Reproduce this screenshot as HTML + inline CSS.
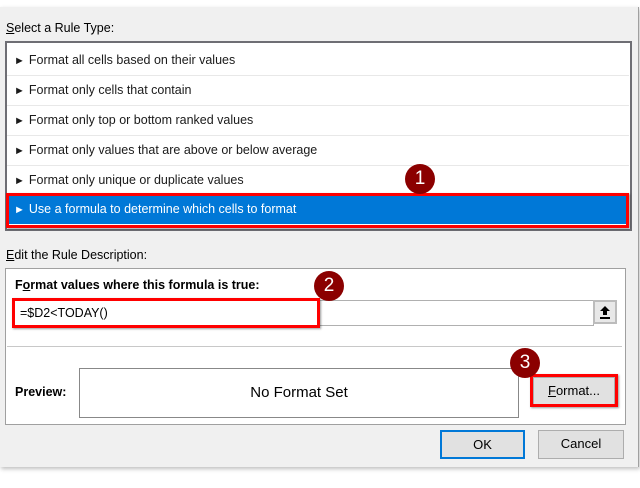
<!DOCTYPE html>
<html><head><style>
body{margin:0;width:640px;height:488px;background:#fff;position:relative;overflow:hidden;font-family:"Liberation Sans",sans-serif;font-size:12px;color:#000}
.a{position:absolute}
.dlg{left:0;top:7px;width:638px;height:460px;background:#f0f0f0;border-right:1px solid #a0a0a0;box-shadow:1px 2px 4px rgba(0,0,0,.25)}
.row{left:7px;width:622px;height:30px;line-height:30px;border-bottom:1px solid #e8e8e8;font-size:12.5px;color:#1a1a1a}
.row span{font-size:11px;margin:0 4px 0 7px}
.c{width:30px;height:30px;border-radius:50%;background:#8b0000;color:#fff;font-size:19px;text-align:center;line-height:30px}
.btn{background:#e1e1e1;border:1px solid #adadad;text-align:center;line-height:26px;font-size:13px}
</style></head><body>
<div class="a dlg"></div>
<div class="a" style="left:6px;top:21px;font-size:12.5px"><u>S</u>elect a Rule Type:</div>
<div class="a" style="left:5px;top:41px;width:623px;height:186px;background:#fff;border:2px solid #6e6e74"></div>
<div class="a row" style="top:45px"><span>►</span>Format all cells based on their values</div>
<div class="a row" style="top:75px"><span>►</span>Format only cells that contain</div>
<div class="a row" style="top:105px"><span>►</span>Format only top or bottom ranked values</div>
<div class="a row" style="top:135px"><span>►</span>Format only values that are above or below average</div>
<div class="a row" style="top:165px"><span>►</span>Format only unique or duplicate values</div>
<div class="a row" style="top:195px;height:29px;line-height:29px;background:#0078d7;color:#fff;border:none"><span>►</span>Use a formula to determine which cells to format</div>
<div class="a" style="left:6px;top:193px;width:617px;height:29px;border:3px solid #f00;box-shadow:1px 1px 2px rgba(0,0,0,.4)"></div>
<div class="a" style="left:6px;top:248px;font-size:12.5px"><u>E</u>dit the Rule Description:</div>
<div class="a" style="left:5px;top:268px;width:619px;height:155px;background:#fff;border:1px solid #a0a0a0"></div>
<div class="a" style="left:15px;top:278px;font-weight:bold;font-size:12.5px">F<u>o</u>rmat values where this formula is true:</div>
<div class="a" style="left:12px;top:300px;width:580px;height:24px;border:1px solid #b0b0b0;background:#fff"></div>
<div class="a" style="left:593px;top:300px;width:20px;height:20px;border:2px solid #bcbcbc;background:#e8e8e8">
<svg width="20" height="20" viewBox="0 0 20 20"><path d="M10 4 L5 9 H8 V13 H12 V9 H15 Z M5 15 H15 V17 H5 Z" fill="#000"/></svg></div>
<div class="a" style="left:12px;top:298px;height:24px;border:3px solid #f00;box-shadow:1px 1px 2px rgba(0,0,0,.4);line-height:24px;font-size:12.5px;padding-left:5px;width:297px">=$D2&lt;TODAY()</div>
<div class="a" style="left:7px;top:346px;width:615px;height:1px;background:#c8c8c8"></div>
<div class="a" style="left:15px;top:385px;font-weight:bold;font-size:12.5px">Preview:</div>
<div class="a" style="left:79px;top:368px;width:438px;height:48px;border:1px solid #888;text-align:center;line-height:48px;font-size:15px">No Format Set</div>
<div class="a btn" style="left:533px;top:377px;width:80px;height:26px"><u>F</u>ormat...</div>
<div class="a" style="left:530px;top:374px;width:82px;height:27px;border:3px solid #f00;box-shadow:1px 1px 2px rgba(0,0,0,.4)"></div>
<div class="a btn" style="left:440px;top:430px;width:81px;height:25px;line-height:25px;border:2px solid #0078d7">OK</div>
<div class="a btn" style="left:538px;top:430px;width:84px;height:27px">Cancel</div>
<div class="a c" style="left:405px;top:164px">1</div>
<div class="a c" style="left:314px;top:271px">2</div>
<div class="a c" style="left:510px;top:348px">3</div>
</body></html>
